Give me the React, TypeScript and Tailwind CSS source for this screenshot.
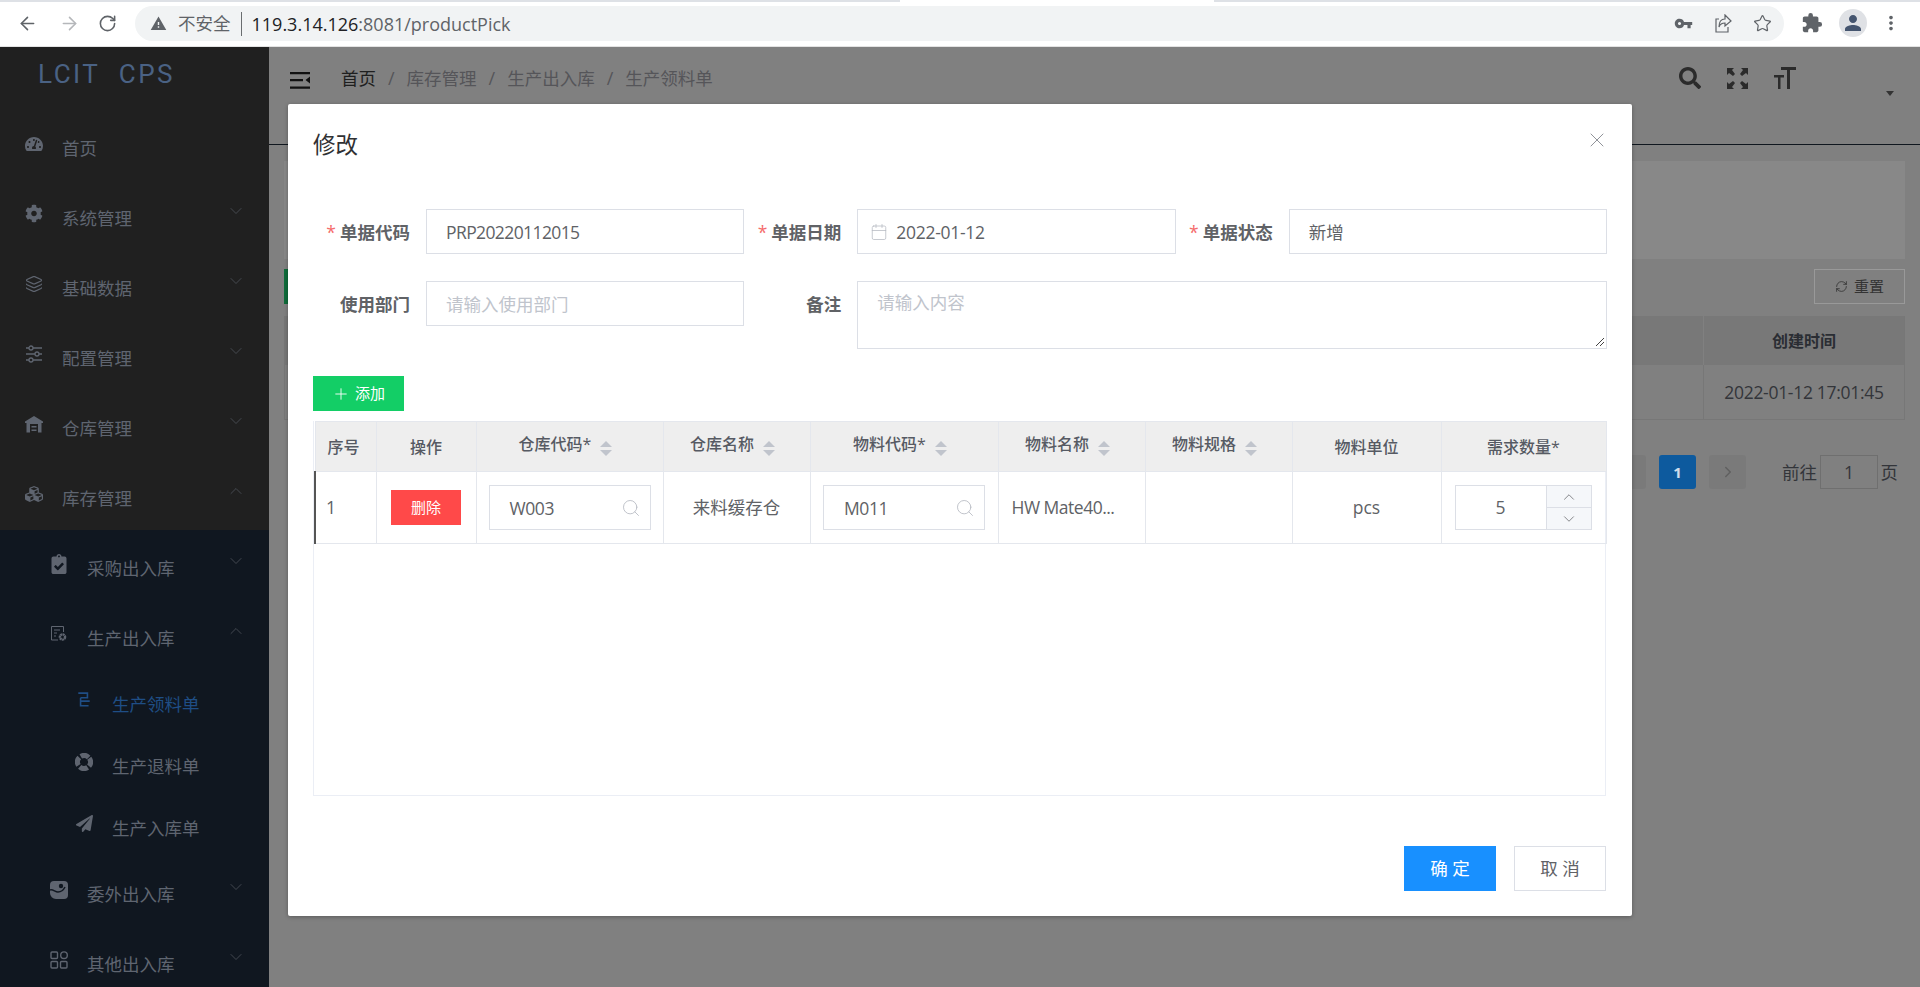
import { ArrowLeft, ArrowRight, Calendar, ChevronDown, ChevronLeft, ChevronRight, ChevronUp, Layers, Plus, RefreshCw, RotateCw, Search, Star, X } from "lucide-react";
import { FaClipboardCheck, FaCog, FaCubes, FaPaperPlane, FaSearch, FaTachometerAlt } from "react-icons/fa";
import { MdExtension, MdMoreVert, MdPerson, MdVpnKey, MdWarning } from "react-icons/md";
import type { ReactNode } from "react";

const FONT = "font-['Open_Sans','Noto_Sans_CJK_SC',sans-serif]";

const SlidersIcon = () => (
  <svg width="18" height="18" viewBox="0 0 18 18" fill="none" stroke="currentColor" strokeWidth="1.3">
    <path d="M1 3h3M8 3h9M1 9h9M14 9h3M1 15h3M8 15h9" />
    <circle cx="6" cy="3" r="2" />
    <circle cx="12" cy="9" r="2" />
    <circle cx="6" cy="15" r="2" />
  </svg>
);

const WarehouseIcon = () => (
  <svg width="18" height="18" viewBox="0 0 18 18" fill="currentColor">
    <path fillRule="evenodd" d="M9 1L0 6.500V8h1.500v9.500h15V8H18V6.500zM5 9h8v8.500H5z" />
    <path d="M6.500 11h5v1.500h-5zM6.500 14.500h5V16h-5z" />
  </svg>
);

const DocCogIcon = () => (
  <svg width="20" height="20" viewBox="0 0 18 18" fill="none" stroke="currentColor" strokeWidth="1">
    <path d="M8 15H1.500V1.500h12V7" />
    <path d="M4 5h6M4 8h3M4 11h2" />
    <circle cx="12.500" cy="12" r="2.600" strokeWidth="2.400" strokeDasharray="2 0.400" />
  </svg>
);

const ListIcon = () => (
  <svg width="16" height="16" viewBox="0 0 14 14" fill="none" stroke="currentColor" strokeWidth="1.4">
    <path d="M2 1h8v4H4M4 5v3h8M4 8v4h7" />
  </svg>
);

const OutsourceIcon = () => (
  <svg width="20" height="20" viewBox="0 0 18 18">
    <path fill="currentColor" d="M4 0h10a4 4 0 0 1 4 4v10a4 4 0 0 1-4 4H6a6 6 0 0 1-6-6V4a4 4 0 0 1 4-4z" />
    <path fill="none" stroke="#101720" strokeWidth="1.500" d="M0 9c3-1 5 2 8 2s5-1 7-5" />
    <circle cx="11" cy="5" r="2.200" fill="#101720" />
  </svg>
);

const GridIcon = () => (
  <svg width="20" height="20" viewBox="0 0 18 18" fill="none" stroke="currentColor" strokeWidth="1.400">
    <rect x="1" y="1" width="6.500" height="6.500" rx="1" />
    <circle cx="14" cy="4.200" r="3.300" />
    <rect x="1" y="10.500" width="6.500" height="6.500" rx="1" />
    <rect x="10.500" y="10.500" width="6.500" height="6.500" rx="1" />
  </svg>
);

const RingIcon = () => (
  <svg width="18" height="18" viewBox="0 0 18 18" fill="none" stroke="currentColor" strokeWidth="5">
    <circle cx="9" cy="9" r="6.500" strokeDasharray="8.200 2" transform="rotate(-36 9 9)" />
  </svg>
);

const ShareIcon = () => (
  <svg width="18" height="20" viewBox="0 0 18 20" fill="none" stroke="#5f6368" strokeWidth="1.200">
    <path d="M5 5H2v13h12v-5" />
    <path d="M11 1l6 6-6 5V9C8 9 6 10 5 13c0-5 2-8 6-8z" />
  </svg>
);

const BigFontIcon = () => (
  <svg width="24" height="24" viewBox="0 0 24 24" fill="#2b2b2b">
    <path d="M8 1h15v3h-6v19h-3V4H8zM1 9h10v2.500H7.500V23H5V11.500H1z" />
  </svg>
);

const ExpandIcon = () => (
  <svg width="23" height="23" viewBox="0 0 23 23" fill="#2b2b2b">
    <path d="M1 1h7L6 3l3 4-2 2-4-3-2 2zM22 1h-7l2 2-3 4 2 2 4-3 2 2zM1 22h7l-2-2 3-4-2-2-4 3-2-2zM22 22h-7l2-2-3-4 2-2 4 3 2-2z" />
  </svg>
);

type Item = { label: string; icon: ReactNode; level: number; arrow?: "up" | "down"; active?: boolean };

const menu: Item[] = [
  { label: "首页", icon: <FaTachometerAlt size={18} />, level: 0 },
  { label: "系统管理", icon: <FaCog size={19} />, level: 0, arrow: "down" },
  { label: "基础数据", icon: <Layers size={20} strokeWidth={1.5} />, level: 0, arrow: "down" },
  { label: "配置管理", icon: <SlidersIcon />, level: 0, arrow: "down" },
  { label: "仓库管理", icon: <WarehouseIcon />, level: 0, arrow: "down" },
  { label: "库存管理", icon: <FaCubes size={18} />, level: 0, arrow: "up" },
  { label: "采购出入库", icon: <FaClipboardCheck size={20} />, level: 1, arrow: "down" },
  { label: "生产出入库", icon: <DocCogIcon />, level: 1, arrow: "up" },
  { label: "生产领料单", icon: <ListIcon />, level: 2, active: true },
  { label: "生产退料单", icon: <RingIcon />, level: 2 },
  { label: "生产入库单", icon: <FaPaperPlane size={17} />, level: 2 },
  { label: "委外出入库", icon: <OutsourceIcon />, level: 1, arrow: "down" },
  { label: "其他出入库", icon: <GridIcon />, level: 1, arrow: "down" },
];

function MenuRow({ item }: { item: Item }) {
  return (
    <div
      className={`flex items-center shrink-0 ${item.level === 2 ? "h-[62px] pl-[75px]" : "h-[70px]"} ${item.level === 1 ? "pl-[50px]" : ""} ${item.level === 0 ? "pl-[25px]" : ""} ${item.level > 0 ? "bg-[#101720]" : ""} ${item.active ? "text-[#1f4e85]" : "text-[#5f6570]"}`}
    >
      <span className="w-[18px] h-[18px] flex items-center justify-center -mt-[3px] shrink-0">{item.icon}</span>
      <span className="ml-[19px] text-[17.5px] leading-none pt-2 whitespace-nowrap">{item.label}</span>
      {item.arrow === "down" && <ChevronDown size={20} strokeWidth={1} className="ml-auto mr-[23px] -mt-2 text-[#4c5159]" />}
      {item.arrow === "up" && <ChevronUp size={20} strokeWidth={1} className="ml-auto mr-[23px] -mt-2 text-[#4c5159]" />}
    </div>
  );
}

function Sidebar() {
  return (
    <aside className="w-[269px] shrink-0 bg-[#202020] overflow-hidden flex flex-col">
      <div className="h-[63px] shrink-0 pl-[38px] pt-[11px] font-['Roboto',sans-serif] font-normal text-[26px] leading-[32px] tracking-[2.5px] [word-spacing:10px] text-[#4a6284] whitespace-nowrap">
        LCIT CPS
      </div>
      {menu.map((item) => (
        <MenuRow key={item.label} item={item} />
      ))}
    </aside>
  );
}

function BrowserBar() {
  return (
    <div className="h-[47px] shrink-0 bg-white border-b border-[#e3e3e3] relative flex items-center">
      <div className="absolute inset-x-0 top-0 h-[2px] flex">
        <div className="w-[900px] bg-[#dee1e6]" />
        <div className="flex-1" />
        <div className="w-[706px] bg-[#dee1e6]" />
      </div>
      <ArrowLeft size={21} strokeWidth={1.8} className="ml-[17px] text-[#5f6368]" />
      <ArrowRight size={21} strokeWidth={1.8} className="ml-[21px] text-[#b5b7ba]" />
      <RotateCw size={19} strokeWidth={2} className="ml-[18px] text-[#5f6368]" />
      <div className="ml-[18px] w-[1649px] h-[35px] mt-[1px] bg-[#f1f3f4] rounded-full flex items-center">
        <MdWarning size={17} className="ml-[15px] text-[#5f6368]" />
        <span className="ml-[11px] text-[17.5px] leading-none text-[#5f6368]">不安全</span>
        <span className="ml-[10px] w-px h-[24px] bg-[#6a6d70]" />
        <span className="ml-[10px] text-[18px] leading-none text-[#202124]">
          119.3.14.126<span className="text-[#5f6368]">:8081/productPick</span>
        </span>
        <MdVpnKey size={19} className="ml-auto text-[#5f6368]" />
        <span className="ml-[21px]"><ShareIcon /></span>
        <Star size={19} strokeWidth={1.5} className="ml-[21px] mr-[12px] text-[#5f6368]" />
      </div>
      <MdExtension size={22} className="ml-[17px] text-[#5f6368]" />
      <span className="ml-[16px] w-[28px] h-[28px] rounded-full bg-[#dfe1e5] flex items-center justify-center">
        <MdPerson size={24} className="text-[#45556f]" />
      </span>
      <MdMoreVert size={22} className="ml-[13px] text-[#5f6368]" />
    </div>
  );
}

function Background() {
  return (
    <main className="flex-1 min-w-0 bg-[#808080] flex flex-col">
      <header className="h-[98px] shrink-0 border-b border-[#10171f] flex items-start">
        <svg width="20" height="17" viewBox="0 0 20 17" className="ml-[21px] mt-[25px]" fill="#111">
          <path d="M0 0h20v2.200H0zM0 7h13v2.200H0zM0 14.500h20v2.200H0zM20 4.500v7L15.500 8z" />
        </svg>
        <nav className="ml-[31px] mt-[20px] flex items-center text-[17.500px] leading-[22px] text-[#555559] whitespace-nowrap">
          <span className="text-[#1f1f1f]">首页</span>
          <span className="mx-[12px] text-[18px]">/</span>
          <span>库存管理</span>
          <span className="mx-[12px] text-[18px]">/</span>
          <span>生产出入库</span>
          <span className="mx-[12px] text-[18px]">/</span>
          <span>生产领料单</span>
        </nav>
        <FaSearch size={22} className="ml-auto mt-[20px] text-[#2b2b2b]" />
        <span className="ml-[25px] mt-[20px]"><ExpandIcon /></span>
        <span className="ml-[24px] mt-[19px]"><BigFontIcon /></span>
        <span className="ml-[89px] mr-[26px] mt-[44px] w-0 h-0 border-x-[4px] border-t-[5px] border-x-transparent border-t-[#333]" />
      </header>
      <div className="px-[15px] pt-[16px] flex flex-col">
        <div className="h-[98px] bg-[#888888]" />
        <div className="h-[35px] mt-[10px] flex justify-between">
          <div className="w-[120px] bg-[#0f6b3a]" />
          <div className="w-[91px] border border-[#999] text-[15px] text-[#333] flex items-center justify-center gap-[6px]">
            <RefreshCw size={13} strokeWidth={1.5} />
            重置
          </div>
        </div>
        <div className="mt-[12px] h-[104px] border-x border-b border-[#777] flex flex-col items-end">
          <div className="h-[49px] w-full bg-[#787878] flex justify-end">
            <div className="w-[201px] border-l border-[#808080] flex items-center justify-center text-[16px] font-bold text-[#2a2d33]">创建时间</div>
          </div>
          <div className="w-[201px] flex-1 border-l border-[#777] flex items-center justify-center text-[17.5px] tracking-[-0.3px] text-[#33353a]">2022-01-12 17:01:45</div>
        </div>
        <div className="mt-[35px] h-[34px] flex items-center justify-end text-[17.5px] text-[#33353a]">
          <div className="w-[37px] h-full rounded-[3px] bg-[#7a7a7a] flex items-center justify-center text-[#606060]">
            <ChevronLeft size={18} />
          </div>
          <div className="ml-[13px] w-[37px] h-full rounded-[3px] bg-[#0d5a9e] flex items-center justify-center text-white/80 text-[15px] font-bold">1</div>
          <div className="ml-[13px] w-[37px] h-full rounded-[3px] bg-[#7a7a7a] flex items-center justify-center text-[#606060]">
            <ChevronRight size={18} />
          </div>
          <span className="ml-[36px]">前往</span>
          <div className="ml-[3px] w-[58px] h-full border border-[#6f6f6f] flex items-center justify-center">1</div>
          <span className="ml-[2.5px] mr-[7px]">页</span>
        </div>
      </div>
    </main>
  );
}

function Label({ text, required }: { text: string; required?: boolean }) {
  return (
    <label className="w-[113px] shrink-0 pr-[16px] pt-[2px] h-[45px] flex items-center justify-end text-[17.5px] font-bold text-[#606266] whitespace-nowrap">
      {required && <span className="text-[#f56c6c] mr-[4px] font-normal">*</span>}
      {text}
    </label>
  );
}

function Field({ children, className = "" }: { children: ReactNode; className?: string }) {
  return (
    <div className={`border border-[#dcdfe6] flex items-center text-[17.5px] text-[#606266] whitespace-nowrap ${className}`}>
      {children}
    </div>
  );
}

const Sort = () => (
  <span className="ml-[9px] inline-flex flex-col gap-[3px] align-middle">
    <span className="w-0 h-0 border-x-[6px] border-b-[6px] border-x-transparent border-b-[#c0c4cc]" />
    <span className="w-0 h-0 border-x-[6px] border-t-[6px] border-x-transparent border-t-[#c0c4cc]" />
  </span>
);

const columns = [
  { label: "序号", w: 61 },
  { label: "操作", w: 100 },
  { label: "仓库代码*", w: 187, sort: true },
  { label: "仓库名称", w: 147, sort: true },
  { label: "物料代码*", w: 188, sort: true },
  { label: "物料名称", w: 147, sort: true },
  { label: "物料规格", w: 147, sort: true },
  { label: "物料单位", w: 149 },
  { label: "需求数量*", w: 165 },
];

function SearchInput({ value }: { value: string }) {
  return (
    <Field className="w-[162px] h-[45px] mx-auto pl-[20px] pr-[9px] justify-between tracking-[-0.4px]">
      <span className="pt-[2px]">{value}</span>
      <Search size={20} strokeWidth={1} className="text-[#b4b8c0]" />
    </Field>
  );
}

function PickTable() {
  return (
    <div className="mt-[10px] w-[1293px] h-[375px] border border-[#ebeef5] border-t-0">
      <table className="w-[1291px] table-fixed border-collapse text-[17.5px] text-[#606266]">
        <colgroup>
          {columns.map((c) => (
            <col key={c.label} style={{ width: c.w }} />
          ))}
        </colgroup>
        <thead>
          <tr className="h-[50px] bg-[#eeeeee]">
            {columns.map((c, i) => (
              <th key={c.label} className={`border border-[#e4e7ed] text-[16px] font-medium text-[#565a63] whitespace-nowrap p-0 ${c.sort ? "pr-[8px]" : ""} ${i === 0 ? "pr-[4px]" : ""}`}>
                <span className={c.sort ? "relative -top-[3px]" : ""}>{c.label}</span>
                {c.sort && <Sort />}
              </th>
            ))}
          </tr>
        </thead>
        <tbody>
          <tr className="h-[72px]">
            <td className="border border-[#e4e7ed] border-l-2 border-l-[#555] pl-[10px]">1</td>
            <td className="border border-[#e4e7ed]">
              <div className="w-[70px] h-[35px] mx-auto bg-[#ff4949] text-white text-[15px] flex items-center justify-center">删除</div>
            </td>
            <td className="border border-[#e4e7ed]"><SearchInput value="W003" /></td>
            <td className="border border-[#e4e7ed] text-center">来料缓存仓</td>
            <td className="border border-[#e4e7ed]"><SearchInput value="M011" /></td>
            <td className="border border-[#e4e7ed] pl-[13px] whitespace-nowrap tracking-[-0.5px]">HW Mate40...</td>
            <td className="border border-[#e4e7ed]" />
            <td className="border border-[#e4e7ed] text-center">pcs</td>
            <td className="border border-[#e4e7ed]">
              <Field className="w-[137px] h-[45px] ml-[13px]">
                <span className="flex-1 text-center">5</span>
                <span className="w-[45px] h-full border-l border-[#dcdfe6] bg-[#f5f7fa] flex flex-col text-[#606266]">
                  <span className="flex-1 flex items-center justify-center border-b border-[#dcdfe6]"><ChevronUp size={18} strokeWidth={1} /></span>
                  <span className="flex-1 flex items-center justify-center"><ChevronDown size={18} strokeWidth={1} /></span>
                </span>
              </Field>
            </td>
          </tr>
        </tbody>
      </table>
    </div>
  );
}

function EditModal() {
  return (
    <div className="absolute left-[288px] top-[104px] w-[1344px] h-[812px] bg-white rounded-[2px] shadow-[0_1px_4px_rgba(0,0,0,0.3)] px-[25px] flex flex-col">
      <div className="h-[105px] shrink-0 flex items-start justify-between">
        <span className="mt-[25px] text-[22.5px] leading-[32px] text-[#303133]">修改</span>
        <X size={24} strokeWidth={1} className="mt-[24px] -mr-[2px] text-[#909399]" />
      </div>
      <div className="grid grid-cols-3 gap-y-[27px] w-full">
        <div className="flex">
          <Label text="单据代码" required />
          <Field className="flex-1 h-[45px] pl-[19px] pt-[2px] tracking-[-0.6px]">PRP20220112015</Field>
        </div>
        <div className="flex">
          <Label text="单据日期" required />
          <Field className="flex-1 h-[45px] pl-[12px]">
            <Calendar size={18} strokeWidth={1} className="text-[#b4b8c0] mr-[8px]" />
            <span className="pt-[2px] tracking-[-0.3px]">2022-01-12</span>
          </Field>
        </div>
        <div className="flex">
          <Label text="单据状态" required />
          <Field className="flex-1 h-[45px] pl-[19px] pt-[2px]">新增</Field>
        </div>
        <div className="flex items-start">
          <Label text="使用部门" />
          <Field className="flex-1 h-[45px] pl-[19px] pt-[2px] text-[#c0c4cc]">请输入使用部门</Field>
        </div>
        <div className="col-span-2 flex items-start">
          <Label text="备注" />
          <div className="relative flex-1 h-[68px] border border-[#dcdfe6] pl-[19px] pt-[8px] text-[17.5px] leading-[24px] text-[#c0c4cc]">
            请输入内容
            <svg width="10" height="10" viewBox="0 0 10 10" className="absolute right-[1px] bottom-[1px]" stroke="#444" strokeWidth="1">
              <path d="M1 9l8-8M5 9l4-4" />
            </svg>
          </div>
        </div>
      </div>
      <button className="mt-[27px] w-[91px] h-[35px] shrink-0 bg-[#13ce66] text-white text-[15px] flex items-center justify-center gap-[5px]">
        <Plus size={18} strokeWidth={1.2} />
        添加
      </button>
      <PickTable />
      <div className="mt-[50px] mr-[1px] flex justify-end gap-[18px]">
        <button className="w-[92px] h-[45px] bg-[#1890ff] text-white text-[17.5px]">确 定</button>
        <button className="w-[92px] h-[45px] border border-[#dcdfe6] text-[#606266] text-[17.5px]">取 消</button>
      </div>
    </div>
  );
}

export default function App() {
  return (
    <div className={`relative w-[1920px] h-[987px] overflow-hidden flex flex-col ${FONT}`}>
      <BrowserBar />
      <div className="flex-1 min-h-0 flex">
        <Sidebar />
        <Background />
      </div>
      <EditModal />
    </div>
  );
}
